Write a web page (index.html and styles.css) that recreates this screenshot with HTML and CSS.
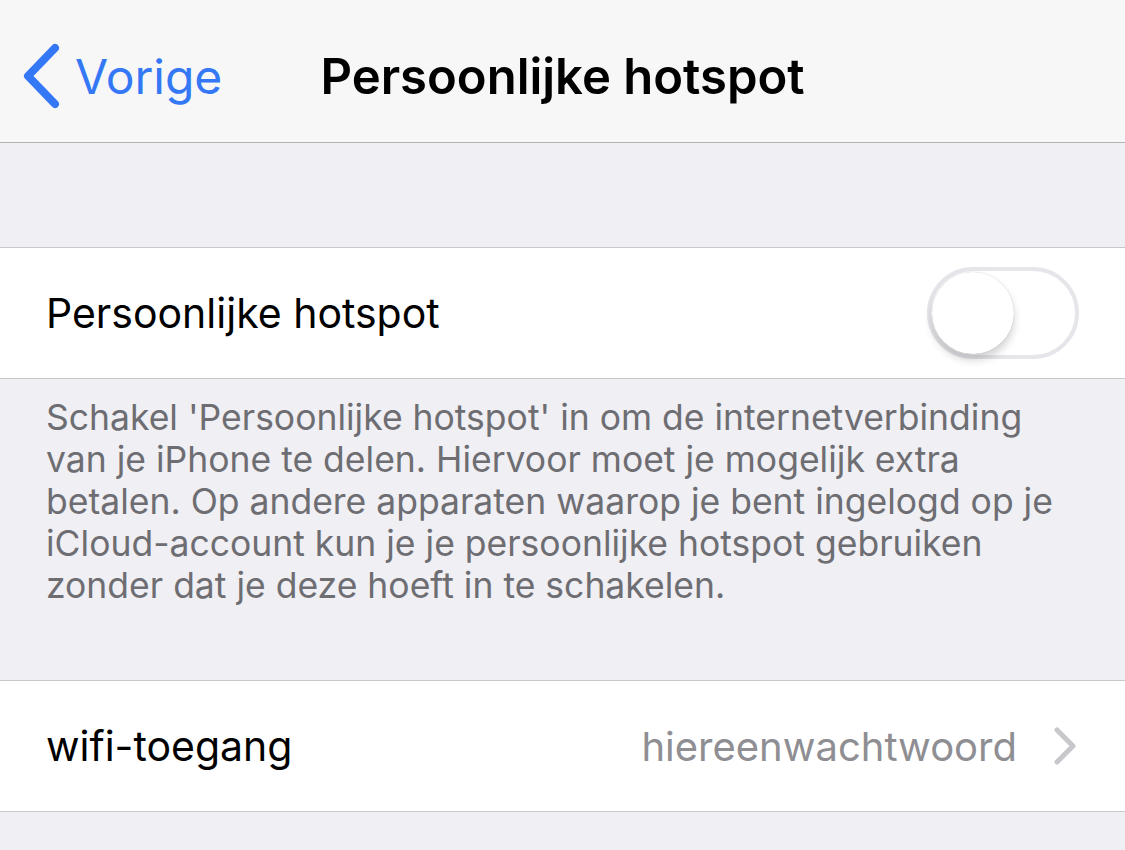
FILE: index.html
```html
<!DOCTYPE html>
<html lang="nl">
<head>
    <meta charset="UTF-8">
    <title>Persoonlijke hotspot</title>
    <link rel="stylesheet" href="styles.css">
</head>
<body>
    <header class="navBar">
        <a class="backButton" href="#">
            <svg class="backChevron" width="38" height="66" viewBox="0 0 38 66">
                <polyline points="32,5 5,33 32,61" fill="none" stroke="#3478f6" stroke-width="8" stroke-linecap="round" stroke-linejoin="round"/>
            </svg>
            <span>Vorige</span>
        </a>
        <h1 class="navTitle">Persoonlijke hotspot</h1>
    </header>

    <div class="spacer"></div>

    <div class="group">
        <div class="row">
            <span class="rowLabel">Persoonlijke hotspot</span>
            <div class="toggle">
                <div class="knob"></div>
            </div>
        </div>
    </div>

    <p class="groupFooter">Schakel 'Persoonlijke hotspot' in om de internetverbinding van je iPhone te delen. Hiervoor moet je mogelijk extra betalen. Op andere apparaten waarop je bent ingelogd op je iCloud-account kun je je persoonlijke hotspot gebruiken zonder dat je deze hoeft in te schakelen.</p>

    <div class="group">
        <div class="row">
            <span class="rowLabel">wifi-toegang</span>
            <span class="rowValue">hiereenwachtwoord</span>
            <svg class="disclosure" width="24" height="40" viewBox="0 0 24 40">
                <polyline points="4,4 20,20 4,36" fill="none" stroke="#c7c7cc" stroke-width="5" stroke-linecap="round" stroke-linejoin="round"/>
            </svg>
        </div>
    </div>
</body>
</html>
```

FILE: styles.css
```css
body {
    margin: 0;
    background-color: #efeff4;
    font-family: Inter, "Noto Sans", sans-serif;
    height: 850px;
    overflow: hidden;
}
.navBar {
    position: relative;
    box-sizing: border-box;
    display: flex;
    align-items: center;
    height: 143px;
    padding-top: 10px;
    background-color: #f7f7f8;
    border-bottom: 1px solid #b2b2b4;
}
.backButton {
    display: flex;
    align-items: center;
    gap: 14px;
    padding-left: 23px;
    color: #3478f6;
    font-size: 48px;
    text-decoration: none;
}
.navTitle {
    position: absolute;
    left: 0;
    right: 0;
    top: 10px;
    bottom: 0;
    margin: 0;
    display: flex;
    align-items: center;
    justify-content: center;
    font-size: 49px;
    font-weight: 600;
    color: #000;
    pointer-events: none;
}
.spacer {
    height: 104px;
}
.group {
    background-color: #fff;
    border-top: 1px solid #c8c7cc;
    border-bottom: 1px solid #c8c7cc;
}
.row {
    display: flex;
    align-items: center;
    height: 130px;
    padding: 0 44px 0 46px;
}
.rowLabel {
    flex: 1;
    font-size: 41px;
    color: #000;
}
.rowValue {
    font-size: 40px;
    color: #8e8e93;
    margin-right: 36px;
}
.toggle {
    box-sizing: border-box;
    width: 152px;
    height: 92px;
    border: 4px solid #e5e5ea;
    border-radius: 46px;
    background-color: #fff;
    padding: 1px;
    margin-right: 2px;
}
.knob {
    width: 82px;
    height: 82px;
    border-radius: 50%;
    background-color: #fff;
    box-shadow: 0 6px 8px rgba(0, 0, 0, 0.18), 0 0 1px rgba(0, 0, 0, 0.25);
}
.disclosure {
    margin-right: 4px;
}
.groupFooter {
    margin: 0;
    padding: 18px 50px 73px 46px;
    font-size: 35.5px;
    line-height: 42px;
    color: #6d6d72;
}
```
